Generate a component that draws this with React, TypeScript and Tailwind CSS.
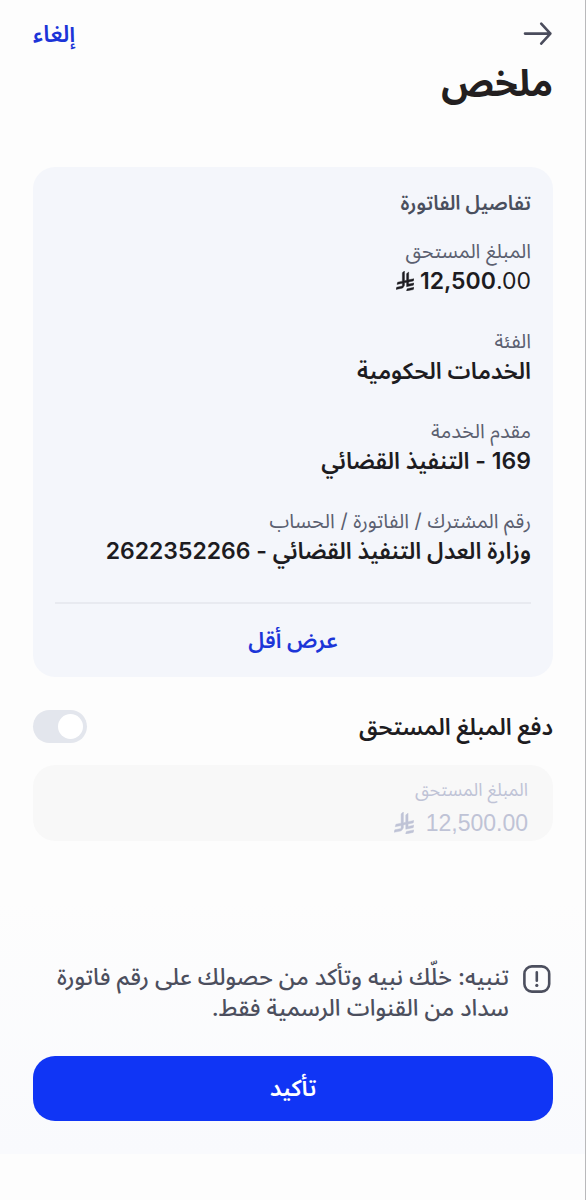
import { useState, type ReactNode } from "react";

function RiyalSign({ className }: { className: string }) {
  return (
    <svg
      viewBox="0 0 1124 1257"
      fill="currentColor"
      stroke="currentColor"
      strokeWidth="24"
      role="img"
      aria-label="ريال"
      className={className}
    >
      <path d="M699.62 1113.02c-20.06 44.48-33.32 92.75-38.4 143.37l424.51-90.24c20.06-44.47 33.31-92.75 38.4-143.37l-424.51 90.24Z" />
      <path d="M1085.73 895.8c20.06-44.47 33.32-92.75 38.4-143.37l-330.68 70.33v-135.2l292.27-62.11c20.06-44.47 33.32-92.75 38.4-143.37l-330.68 70.27V66.13c-50.67 28.45-95.67 66.32-132.25 110.99v403.35l-132.25 28.11V0c-50.67 28.44-95.67 66.32-132.25 110.99v525.69l-295.91 62.88c-20.06 44.47-33.33 92.75-38.42 143.37l334.33-71.05v170.26l-358.3 76.14c-20.06 44.47-33.32 92.75-38.4 143.37l375.04-79.7c30.53-6.35 56.77-24.4 73.83-49.24l68.78-101.97v-.02c7.14-10.55 11.3-23.27 11.3-36.97v-149.98l132.25-28.11v270.4l424.53-90.28Z" />
    </svg>
  );
}

function ArrowIcon() {
  return (
    <svg
      viewBox="0 0 28 24"
      fill="none"
      stroke="currentColor"
      strokeWidth="2.6"
      strokeLinecap="round"
      strokeLinejoin="round"
      className="h-6 w-7 overflow-visible"
      aria-hidden="true"
    >
      <path d="M0 11.6H25.4M16.2 1.6L25.4 11.6L16.2 21.6" />
    </svg>
  );
}

function AlertIcon() {
  return (
    <svg viewBox="0 0 28 28" fill="none" stroke="currentColor" className="mt-[3px] size-7 shrink-0" aria-hidden="true">
      <rect x="1.4" y="1.4" width="24.8" height="25.2" rx="7.5" strokeWidth="2.6" />
      <path d="M13.8 7.4V15.8" strokeWidth="2.6" strokeLinecap="round" />
      <circle cx="13.8" cy="20.4" r="1.6" fill="currentColor" stroke="none" />
    </svg>
  );
}

function Detail({ label, children }: { label: string; children: ReactNode }) {
  return (
    <div>
      <dt className="text-xl leading-[30px] text-[#5b6070]">{label}</dt>
      <dd className="text-[23px] leading-[30px] font-semibold text-[#1d1c21]">{children}</dd>
    </div>
  );
}

export default function App() {
  const [payFull, setPayFull] = useState(false);

  return (
    <main
      dir="rtl"
      lang="ar"
      className="flex min-h-screen flex-col border-r border-[#b9b9bb] bg-[#fdfdfd] font-['Inter','Noto_Sans_Arabic','Noto_Sans','DejaVu_Sans',sans-serif]"
    >
      <header className="pt-5 pr-8 pl-[33px]">
        <div className="flex h-7 items-center justify-between">
          <button type="button" aria-label="رجوع" className="text-[#4a4c5c]">
            <ArrowIcon />
          </button>
          <button type="button" className="text-[23px] leading-7 font-semibold text-[#1c35d8]">
            إلغاء
          </button>
        </div>
        <h1 className="mt-2.5 text-[37px] leading-[50px] font-bold text-[#231f20]">ملخص</h1>
      </header>

      <section className="mt-[59px] mr-8 ml-[33px] rounded-[22px] bg-[#f4f6fb] px-[22px] pt-5">
        <h2 className="text-xl leading-8 font-semibold text-[#4a4f5e]">تفاصيل الفاتورة</h2>
        <dl className="mt-[17px] flex flex-col gap-[30px]">
          <Detail label="المبلغ المستحق">
            <span className="flex items-center gap-1.5">
              <span>
                12,500<span className="font-normal">.00</span>
              </span>
              <RiyalSign className="h-5 w-[18px]" />
            </span>
          </Detail>
          <Detail label="الفئة">الخدمات الحكومية</Detail>
          <Detail label="مقدم الخدمة">169 - التنفيذ القضائي</Detail>
          <Detail label="رقم المشترك / الفاتورة / الحساب">وزارة العدل التنفيذ القضائي - 2622352266</Detail>
        </dl>
        <div className="mt-9 border-t-2 border-[#e8eaf0]">
          <button type="button" className="h-[73px] w-full text-[22px] font-semibold text-[#1c35d8]">
            عرض أقل
          </button>
        </div>
      </section>

      <section className="pt-[33px] pr-8 pl-[33px]">
        <div className="flex items-center justify-between">
          <label htmlFor="pay-full" className="text-[23px] leading-8 font-semibold text-[#1d1c21]">
            دفع المبلغ المستحق
          </label>
          <input
            id="pay-full"
            type="checkbox"
            role="switch"
            checked={payFull}
            onChange={(e) => setPayFull(e.target.checked)}
            className="flex h-[33px] w-[54px] appearance-none items-center rounded-full bg-[#e3e6ed] px-1 before:h-[25px] before:w-[25px] before:rounded-full before:bg-white checked:justify-end checked:bg-[#1035f5]"
          />
        </div>
        <div className="mt-[22px] h-[76px] rounded-[22px] bg-[#f8f8f8] px-[25px] pt-3">
          <label htmlFor="amount" className="block text-lg leading-[26px] text-[#bfc3d6]">
            المبلغ المستحق
          </label>
          <div className="mt-1 flex items-center gap-2.5 text-[#bfc3d6]">
            <input
              id="amount"
              disabled
              defaultValue="12,500.00"
              className="h-8 w-[104px] bg-transparent text-right font-['Liberation_Sans',sans-serif] text-[23px]"
            />
            <RiyalSign className="h-[22px] w-5" />
          </div>
        </div>
      </section>

      <footer className="mt-auto pb-[46px]">
        <div className="bg-linear-to-b from-[#fdfdfd] to-[#f9fafd] pt-[60px] pr-8 pb-[33px] pl-[33px]">
          <div className="flex gap-3.5 pr-0.5 text-[#4c4f5e]">
            <AlertIcon />
            <p className="text-[23px] leading-[31px] font-medium">
              تنبيه: خلّك نبيه وتأكد من حصولك على رقم فاتورة سداد من القنوات الرسمية فقط.
            </p>
          </div>
          <button
            type="button"
            className="mt-8 h-[65px] w-full rounded-[22px] bg-[#1035f5] text-[23px] font-semibold text-white"
          >
            تأكيد
          </button>
        </div>
      </footer>
    </main>
  );
}
